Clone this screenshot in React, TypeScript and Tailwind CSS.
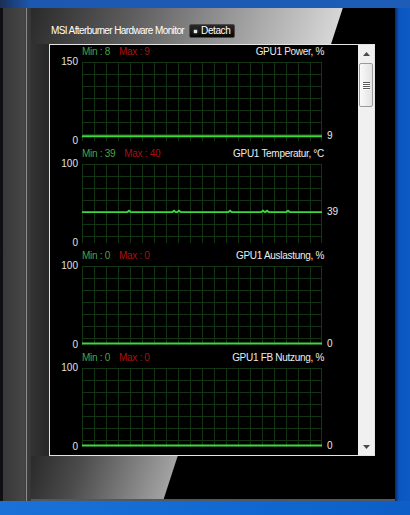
import React from 'react';

type Graph = {
  min: number;
  max: number;
  title: string;
  top: number;
  value: number;
  bumps?: number[];
};

const graphs: Graph[] = [
  { min: 8, max: 9, title: 'GPU1 Power, %', top: 150, value: 9 },
  {
    min: 39,
    max: 40,
    title: 'GPU1 Temperatur, °C',
    top: 100,
    value: 39,
    bumps: [47, 92, 97, 148, 181, 185, 206],
  },
  { min: 0, max: 0, title: 'GPU1 Auslastung, %', top: 100, value: 0 },
  { min: 0, max: 0, title: 'GPU1 FB Nutzung, %', top: 100, value: 0 },
];

const GRID_W = 240;
const GRID_H = 79;

const lineY = (g: Graph) => {
  const y = GRID_H - (g.value / g.top) * GRID_H;
  return Math.min(GRID_H - 1.5, y);
};

const linePoints = (g: Graph) => {
  const y = lineY(g);
  if (!g.bumps) return `0,${y} ${GRID_W},${y}`;
  const pts: string[] = ['0,' + y];
  g.bumps.forEach((x) => {
    pts.push(`${x - 2},${y}`, `${x},${y - 1.5}`, `${x + 2},${y}`);
  });
  pts.push(`${GRID_W},${y}`);
  return pts.join(' ');
};

const GraphBlock = ({ g }: { g: Graph }) => {
  const y = lineY(g);
  return (
    <div className="flex h-[102px] flex-col">
      <div className="flex h-[14px] items-center pl-[32px] pr-[34px] text-[10px] leading-[12px] tracking-[-0.3px]">
        <span className="text-[#47a447]">Min : {g.min}</span>
        <span className="ml-[9px] text-[#a81212]">Max : {g.max}</span>
        <span className="ml-auto text-[#ececec]">{g.title}</span>
      </div>
      <div className="mt-[3px] flex h-[79px]">
        <div className="-mt-[6px] flex h-[91px] w-[28px] flex-col justify-between text-right text-[10px] leading-[12px] text-[#e0e0e0]">
          <span>{g.top}</span>
          <span>0</span>
        </div>
        <div className="relative ml-[4px] h-[79px] w-[240px] border-r border-[#133513] bg-[linear-gradient(to_right,#133513_1px,transparent_1px),linear-gradient(to_bottom,#133513_1px,transparent_1px)] [background-size:12px_12px]">
          <svg className="absolute inset-0" width={GRID_W} height={GRID_H} viewBox={`0 0 ${GRID_W} ${GRID_H}`}>
            <polyline points={linePoints(g)} fill="none" stroke="#3cd83c" strokeWidth="1.8" />
          </svg>
        </div>
        <div className="relative flex-1 pl-[5px] text-[10px] leading-[12px] text-[#e8e8e8]">
          <span className="absolute left-[5px]" style={{ top: y - 6 }}>
            {g.value}
          </span>
        </div>
      </div>
    </div>
  );
};

const Scrollbar = () => (
  <div className="flex w-[16px] flex-col bg-[#f0f0f0]">
    <div className="flex h-[17px] items-center justify-center">
      <svg width="7" height="4" viewBox="0 0 7 4">
        <polygon points="3.5,0 7,4 0,4" fill="#4a4a4a" />
      </svg>
    </div>
    <div className="mx-[1px] mt-[1px] flex h-[44px] flex-col items-center justify-center gap-[1px] rounded-[2px] border border-[#9a9a9a] bg-[linear-gradient(to_right,#fafafa,#e2e2e2)]">
      {[0, 1, 2, 3].map((i) => (
        <div key={i} className="h-[1px] w-[7px] bg-[#5a5a5a] shadow-[0_1px_0_#ffffff]" />
      ))}
    </div>
    <div className="flex-1" />
    <div className="flex h-[17px] items-center justify-center">
      <svg width="7" height="4" viewBox="0 0 7 4">
        <polygon points="0,0 7,0 3.5,4" fill="#4a4a4a" />
      </svg>
    </div>
  </div>
);

export default function App() {
  return (
    <div className="flex h-[515px] w-[410px] flex-col overflow-hidden bg-[#0f5ec6] font-['Liberation_Sans',Arial,sans-serif]">
      <div className="h-[8px] bg-[linear-gradient(to_right,#1a2e55,#1c58b0_30px,#1d5db8)]" />
      <div className="flex h-[493px]">
        <div className="w-[31px] bg-[linear-gradient(to_right,#101014_0px,#101014_3px,#383838_3px,#464646_24px,#3e3e3e_26px,#8a8a8a_26px,#8a8a8a_27px,#3c3c3c_27px,#363636_31px)]" />
        <div className="flex w-[364px] flex-col">
          <div className="flex h-[36px] items-end pb-[6px] pl-[20px] bg-[linear-gradient(108deg,#2a2a2a_0px,#5e5e5e_100px,#a8a8a8_220px,#d6d6d6_296px,#000000_297px)]">
            <span className="text-[10px] leading-[14px] tracking-[-0.6px] text-white">
              MSI Afterburner Hardware Monitor
            </span>
            <button
              type="button"
              className="ml-[5px] flex h-[14px] items-center gap-[4px] rounded-[2px] border border-[#4a4a4a] bg-[linear-gradient(to_bottom,#2a2a2a,#050505)] px-[4px] text-[10px] leading-[12px] tracking-[-0.4px] text-white"
            >
              <span className="h-[3px] w-[3px] bg-[#e8e8e8] shadow-[0_0_2px_#ffffff]" />
              Detach
            </button>
          </div>
          <div className="flex h-[412px]">
            <div className="w-[18px] bg-[linear-gradient(to_right,#333333,#262626)]" />
            <div className="flex w-[326px] border border-[#e4e4e4] bg-black">
              <div className="flex w-[308px] flex-col">
                {graphs.map((g) => (
                  <GraphBlock key={g.title} g={g} />
                ))}
              </div>
              <Scrollbar />
            </div>
            <div className="w-[20px] bg-black" />
          </div>
          <div className="h-[45px] border-b-2 border-[#4f5866] bg-[linear-gradient(108deg,#2a2a2a_0px,#4c4c4c_50px,#a2a2a2_139px,#000000_140px)]" />
        </div>
        <div className="w-[15px] bg-[linear-gradient(to_right,#0a2a66,#0b56c0_4px,#0d5ac4)]" />
      </div>
      <div className="h-[14px] bg-[linear-gradient(to_right,#1a72d8,#1168d2_60%,#0d5ec6)]" />
    </div>
  );
}
